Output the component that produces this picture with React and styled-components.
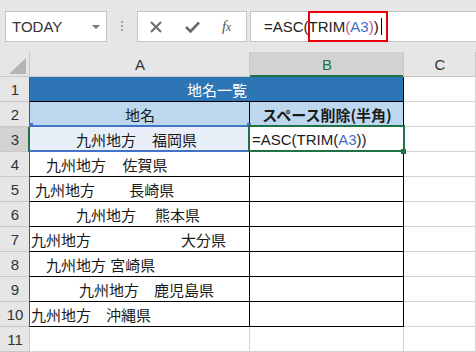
import React from 'react';
import styled, { createGlobalStyle } from 'styled-components';

const Global = createGlobalStyle`
  html, body { margin: 0; padding: 0; background: #e6e6e6; }
  body { width: 476px; height: 352px; overflow: hidden; font-family: "Liberation Sans", Arial, sans-serif; }
`;

const JP = `"Noto Sans CJK JP", "Liberation Sans", sans-serif`;

const Page = styled.div`
  width: 476px;
  height: 352px;
  overflow: hidden;
  background: #e6e6e6;
  display: flex;
  flex-direction: column;
`;

const Toolbar = styled.div`
  height: 52px;
  flex: none;
  box-sizing: border-box;
  padding: 11px 0 0 5px;
  display: flex;
  align-items: flex-start;
`;

const Box = styled.div`
  height: 31px;
  box-sizing: border-box;
  background: #fff;
  border: 1px solid #c6c6c6;
  display: flex;
  align-items: center;
`;

const NameBox = styled(Box)`
  width: 102px;
  padding: 0 6px 0 6px;
  justify-content: space-between;
  font-size: 15px;
  color: #333;
`;

const Grip = styled.div`
  width: 2px;
  margin: 10px 14px 0 14px;
  display: flex;
  flex-direction: column;
  gap: 2px;
  span { width: 2px; height: 2px; background: #a0a0a0; }
`;

const FuncBox = styled(Box)`
  width: 110px;
  padding-left: 12px;
`;

const IconSlot = styled.div`
  display: flex;
  align-items: center;
  margin-left: ${p => p.$ml || 0}px;
`;

const Fx = styled.span`
  font-family: "Liberation Serif", "DejaVu Serif", serif;
  font-style: italic;
  font-size: 15px;
  color: #555;
  letter-spacing: -0.5px;
  b { font-weight: 400; font-size: 12px; }
`;

const FormulaBox = styled(Box)`
  flex: 1;
  margin-left: 3px;
  margin-right: -4px;
  padding-left: 13px;
  position: relative;
  font-size: 15px;
  color: #222;
  white-space: pre;
`;

const Caret = styled.span`
  display: inline-block;
  width: 1px;
  height: 17px;
  background: #000;
  margin-left: 2px;
`;

const RedMark = styled.div`
  position: absolute;
  top: -1px;
  bottom: -1px;
  left: 57px;
  width: 80px;
  box-sizing: border-box;
  border: 2px solid #e8000b;
`;

const Tok = styled.span`
  color: ${p => p.$c || 'inherit'};
`;

const Sheet = styled.div`
  display: grid;
  grid-template-columns: 30px 220px 154px 72px;
  grid-auto-rows: 25px;
`;

const Cell = styled.div`
  box-sizing: border-box;
  display: flex;
  align-items: center;
  position: relative;
  min-width: 0;
  white-space: pre;
`;

const Corner = styled(Cell)`
  background: #e6e6e6;
  box-shadow: inset -1px -1px 0 #c8c8c8;
  justify-content: flex-end;
  align-items: flex-end;
  padding: 0 4px 3px 0;
`;

const ColHead = styled(Cell)`
  justify-content: center;
  font-size: 15px;
  color: ${p => (p.$sel ? '#217346' : '#333')};
  background: ${p => (p.$sel ? '#d2d2d2' : '#e6e6e6')};
  box-shadow: ${p => (p.$sel
    ? 'inset -1px 0 0 #c8c8c8, inset 0 -2px 0 #217346'
    : 'inset -1px -1px 0 #c8c8c8')};
`;

const RowHead = styled(Cell)`
  justify-content: center;
  font-size: 15px;
  color: #333;
  background: ${p => (p.$sel ? '#d2d2d2' : '#e6e6e6')};
  box-shadow: ${p => (p.$sel
    ? 'inset -2px 0 0 #217346, inset 0 -1px 0 #c8c8c8'
    : `inset -1px 0 0 ${p.$edge ? '#555' : '#c8c8c8'}, inset 0 -1px 0 #c8c8c8`)};
`;

const Grid = styled(Cell)`
  background: #fff;
  box-shadow: inset -1px -1px 0 #d4d4d4;
`;

const TableCell = styled(Cell)`
  font-family: ${JP};
  font-size: 15px;
  color: #1a1a1a;
  background: ${p => p.$bg || '#fff'};
  box-shadow: inset -1px -1px 0 #000;
  justify-content: ${p => (p.$center ? 'center' : 'flex-start')};
  font-weight: ${p => (p.$bold ? 700 : 400)};
  grid-column: ${p => p.$span || 'auto'};
  padding-left: ${p => p.$indent || 0}px;
`;

const Title = styled(TableCell)`
  color: #fff;
`;

const Pref = styled.span`
  margin-left: ${p => p.$gap}px;
`;

const RefCell = styled(TableCell)`
  &::before {
    content: '';
    position: absolute;
    top: -2px;
    bottom: 0;
    left: -1px;
    right: 0;
    border-top: 2px solid #4472c4;
    border-bottom: 2px solid #4472c4;
    pointer-events: none;
  }
`;

const Handle = styled.span`
  position: absolute;
  width: 4px;
  height: 4px;
  background: #4472c4;
  ${p => (p.$top ? 'top: -4px;' : 'bottom: -2px;')}
  ${p => (p.$left ? 'left: -1px;' : 'right: -1px;')}
`;

const ActiveCell = styled(TableCell)`
  font-family: "Liberation Sans", Arial, sans-serif;
  padding-left: 2px;
  &::after {
    content: '';
    position: absolute;
    top: -2px;
    left: -2px;
    right: -1px;
    bottom: 0;
    border: 2px solid #217346;
    z-index: 2;
  }
`;

const FillHandle = styled.span`
  position: absolute;
  right: -2px;
  bottom: -2px;
  width: 5px;
  height: 5px;
  background: #217346;
  z-index: 3;
`;

const rows = [
  { n: 4, indent: 16, gap: 16.6, pref: '佐賀県' },
  { n: 5, indent: 5, gap: 34.3, pref: '長崎県' },
  { n: 6, indent: 46, gap: 19, pref: '熊本県' },
  { n: 7, indent: 1, gap: 90, pref: '大分県' },
  { n: 8, indent: 16, gap: 4.3, pref: '宮崎県' },
  { n: 9, indent: 49, gap: 15, pref: '鹿児島県' },
  { n: 10, indent: 1, gap: 15, pref: '沖縄県' },
];

const PINK = '#c8509a';
const BLUE = '#3f6fc6';

export default function App() {
  return (
    <Page>
      <Global />
      <Toolbar>
        <NameBox>
          <span>TODAY</span>
          <svg width="8" height="4" viewBox="0 0 8 4"><polygon points="0,0 8,0 4,4" fill="#777" /></svg>
        </NameBox>
        <Grip><span /><span /><span /></Grip>
        <FuncBox>
          <IconSlot>
            <svg width="12" height="12" viewBox="0 0 12 12">
              <path d="M1 1 L11 11 M11 1 L1 11" stroke="#6b6b6b" strokeWidth="2" fill="none" />
            </svg>
          </IconSlot>
          <IconSlot $ml={23}>
            <svg width="15" height="12" viewBox="0 0 15 12">
              <path d="M1 6 L5.5 10.5 L14 1.5" stroke="#6b6b6b" strokeWidth="2.6" fill="none" />
            </svg>
          </IconSlot>
          <IconSlot $ml={22}>
            <Fx>f<b>x</b></Fx>
          </IconSlot>
        </FuncBox>
        <FormulaBox>
          <Tok>=ASC(TRIM</Tok>
          <Tok $c={PINK}>(</Tok>
          <Tok $c={BLUE}>A3</Tok>
          <Tok $c={PINK}>)</Tok>
          <Tok>)</Tok>
          <Caret />
          <RedMark />
        </FormulaBox>
      </Toolbar>

      <Sheet>
        <Corner>
          <svg width="17" height="16" viewBox="0 0 17 16"><polygon points="17,0 17,16 0,16" fill="#b4b4b4" /></svg>
        </Corner>
        <ColHead>A</ColHead>
        <ColHead $sel>B</ColHead>
        <ColHead>C</ColHead>

        <RowHead $edge>1</RowHead>
        <Title $span="span 2" $bg="#2e75b6" $center>地名一覧</Title>
        <Grid />

        <RowHead $edge>2</RowHead>
        <TableCell $bg="#bdd7ee" $center>地名</TableCell>
        <TableCell $bg="#bdd7ee" $center $bold>スペース削除(半角)</TableCell>
        <Grid />

        <RowHead $sel>3</RowHead>
        <RefCell $bg="#e8eff8" $indent={46}>
          九州地方<Pref $gap={16}>福岡県</Pref>
          <Handle $top $left /><Handle $top /><Handle $left /><Handle />
        </RefCell>
        <ActiveCell>
          <Tok>=ASC(TRIM(</Tok>
          <Tok $c={BLUE}>A3</Tok>
          <Tok>))</Tok>
          <FillHandle />
        </ActiveCell>
        <Grid />

        {rows.map(r => (
          <React.Fragment key={r.n}>
            <RowHead $edge>{r.n}</RowHead>
            <TableCell $indent={r.indent}>
              九州地方<Pref $gap={r.gap}>{r.pref}</Pref>
            </TableCell>
            <TableCell />
            <Grid />
          </React.Fragment>
        ))}

        <RowHead>11</RowHead>
        <Grid />
        <Grid />
        <Grid />
      </Sheet>
    </Page>
  );
}
